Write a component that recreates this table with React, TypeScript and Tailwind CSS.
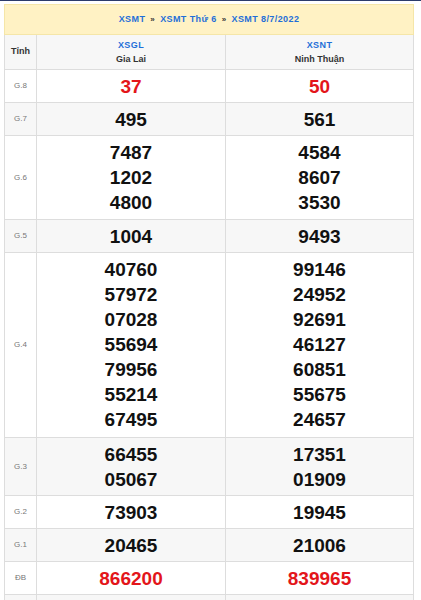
import React from 'react';

type Row = {
  label: string;
  gl: string[];
  nt: string[];
  red?: boolean;
  pb?: string;
};

const ROWS: Row[] = [
  { label: 'G.8', gl: ['37'], nt: ['50'], red: true },
  { label: 'G.7', gl: ['495'], nt: ['561'] },
  { label: 'G.6', gl: ['7487', '1202', '4800'], nt: ['4584', '8607', '3530'], pb: 'pb-1' },
  { label: 'G.5', gl: ['1004'], nt: ['9493'] },
  {
    label: 'G.4',
    gl: ['40760', '57972', '07028', '55694', '79956', '55214', '67495'],
    nt: ['99146', '24952', '92691', '46127', '60851', '55675', '24657'],
    pb: 'pb-[5px]',
  },
  { label: 'G.3', gl: ['66455', '05067'], nt: ['17351', '01909'] },
  { label: 'G.2', gl: ['73903'], nt: ['19945'] },
  { label: 'G.1', gl: ['20465'], nt: ['21006'] },
  { label: 'ĐB', gl: ['866200'], nt: ['839965'], red: true },
];

function Numbers({ values, red, pb }: { values: string[]; red?: boolean; pb?: string }) {
  return (
    <td className={`border border-[#dddddd] pt-1 ${pb ?? 'pb-[3px]'} text-center align-middle`}>
      {values.map((v) => (
        <div
          key={v}
          className={`text-[19px] leading-[25px] font-bold ${red ? 'text-[#e3151a]' : 'text-[#111111]'}`}
        >
          {v}
        </div>
      ))}
    </td>
  );
}

export default function App() {
  return (
    <div className="w-[421px] h-[600px] overflow-hidden bg-white font-['Liberation_Sans',Arial,sans-serif]">
      <div className="h-px bg-[#2c3b6b]" />
      <div className="pt-[3px] pl-[4px]">
        <table className="w-[409px] table-fixed border-collapse">
          <colgroup>
            <col className="w-[32px]" />
            <col className="w-[189px]" />
            <col className="w-[188px]" />
          </colgroup>
          <tbody>
            <tr className="bg-[#fff2c4]">
              <td colSpan={3} className="h-[30px] border border-[#f5e6a8] text-center text-[9px] tracking-[0.4px] font-bold text-[#1f6fd8]">
                <span>XSMT</span>
                <span className="mx-[5px] text-[8px] text-[#333]">»</span>
                <span>XSMT Thứ 6</span>
                <span className="mx-[5px] text-[8px] text-[#333]">»</span>
                <span>XSMT 8/7/2022</span>
              </td>
            </tr>
            <tr className="bg-[#f7f7f7] h-[35px]">
              <td className="border border-[#dddddd] text-center text-[9px] font-bold text-[#333]">Tỉnh</td>
              <td className="border border-[#dddddd] text-center text-[9px] leading-[14px] font-bold">
                <div className="text-[#1f6fd8] tracking-[0.4px]">XSGL</div>
                <div className="text-[#333]">Gia Lai</div>
              </td>
              <td className="border border-[#dddddd] text-center text-[9px] leading-[14px] font-bold">
                <div className="text-[#1f6fd8] tracking-[0.4px]">XSNT</div>
                <div className="text-[#333]">Ninh Thuận</div>
              </td>
            </tr>
            {ROWS.map((r, i) => (
              <tr key={r.label} className={i % 2 === 1 ? 'bg-[#f7f7f7]' : 'bg-white'}>
                <td className="border border-[#dddddd] text-center text-[8px] text-[#777]">{r.label}</td>
                <Numbers values={r.gl} red={r.red} pb={r.pb} />
                <Numbers values={r.nt} red={r.red} pb={r.pb} />
              </tr>
            ))}
            <tr className="bg-[#f7f7f7] h-[30px]">
              <td className="border border-[#dddddd]" />
              <td className="border border-[#dddddd]" />
              <td className="border border-[#dddddd]" />
            </tr>
          </tbody>
        </table>
      </div>
    </div>
  );
}
